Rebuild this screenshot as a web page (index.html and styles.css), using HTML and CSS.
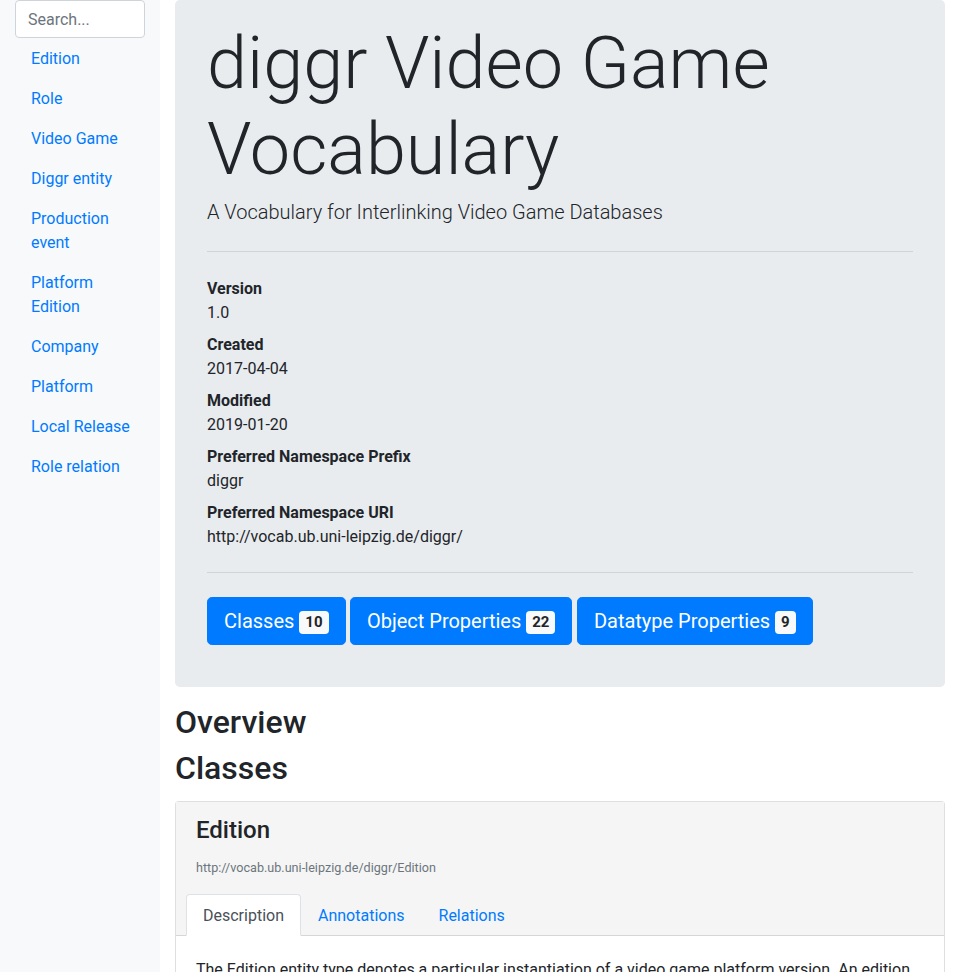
FILE: index.html
```html
<!DOCTYPE html>
<html lang="en">
<head>
<meta charset="utf-8">
<title>diggr Video Game Vocabulary</title>
<link rel="stylesheet" href="styles.css">
</head>
<body>
<div class="page">
  <aside class="sidebar">
    <input class="search" type="text" placeholder="Search...">
    <nav class="side-nav">
      <a href="#">Edition</a>
      <a href="#">Role</a>
      <a href="#">Video Game</a>
      <a href="#">Diggr entity</a>
      <a href="#">Production event</a>
      <a href="#">Platform Edition</a>
      <a href="#">Company</a>
      <a href="#">Platform</a>
      <a href="#">Local Release</a>
      <a href="#">Role relation</a>
    </nav>
  </aside>
  <main class="main">
    <section class="jumbotron">
      <h1 class="title">diggr Video Game Vocabulary</h1>
      <p class="lead">A Vocabulary for Interlinking Video Game Databases</p>
      <hr class="rule">
      <dl class="meta">
        <dt>Version</dt>
        <dd>1.0</dd>
        <dt>Created</dt>
        <dd>2017-04-04</dd>
        <dt>Modified</dt>
        <dd>2019-01-20</dd>
        <dt>Preferred Namespace Prefix</dt>
        <dd>diggr</dd>
        <dt>Preferred Namespace URI</dt>
        <dd>http://vocab.ub.uni-leipzig.de/diggr/</dd>
      </dl>
      <hr class="rule rule-end">
      <div class="buttons">
        <a class="btn" href="#">Classes <span class="badge">10</span></a>
        <a class="btn" href="#">Object Properties <span class="badge">22</span></a>
        <a class="btn" href="#">Datatype Properties <span class="badge">9</span></a>
      </div>
    </section>
    <h2 class="section-title">Overview</h2>
    <h2 class="section-title">Classes</h2>
    <div class="card">
      <div class="card-header">
        <h4 class="card-title">Edition</h4>
        <p class="uri">http://vocab.ub.uni-leipzig.de/diggr/Edition</p>
        <ul class="tabs">
          <li><a class="tab active" href="#">Description</a></li>
          <li><a class="tab" href="#">Annotations</a></li>
          <li><a class="tab" href="#">Relations</a></li>
        </ul>
      </div>
      <div class="card-body">
        <p>The Edition entity type denotes a particular instantiation of a video game platform version. An edition is a specific release of a video game on a particular platform.</p>
      </div>
    </div>
  </main>
</div>
</body>
</html>
```
FILE: styles.css
```css
* { box-sizing: border-box; }
html, body { margin: 0; padding: 0; }
body {
  font-family: Roboto, "Liberation Sans", sans-serif;
  font-size: 16px;
  line-height: 1.5;
  color: #212529;
  background: #fff;
}
a { color: #007bff; text-decoration: none; }

.page {
  display: grid;
  grid-template-columns: 160px 1fr;
  min-height: 100vh;
}

.sidebar {
  background: #f8f9fa;
  padding: 0 15px;
}
.search {
  display: block;
  width: 100%;
  height: 38px;
  padding: 6px 12px;
  font-family: inherit;
  font-size: 16px;
  line-height: 1.5;
  color: #495057;
  background: #fff;
  border: 1px solid #ced4da;
  border-radius: 4px;
}
.search::placeholder { color: #6c757d; }
.side-nav { display: flex; flex-direction: column; margin-top: 1px; }
.side-nav a { display: block; padding: 8px 12px 8px 16px; }

.main { padding: 0 15px; min-width: 0; }

.jumbotron {
  background: #e9ecef;
  border-radius: 4.8px;
  padding: 21px 32px 42px;
  margin-bottom: 16px;
}
.title {
  font-size: 72px;
  font-weight: 300;
  line-height: 1.2;
  margin: 0 0 3px;
}
.lead {
  font-size: 20px;
  font-weight: 300;
  line-height: 1.5;
  margin: 0 0 16px;
}
.rule {
  border: 0;
  border-top: 1px solid rgba(0,0,0,.1);
  margin: 24px 0;
}
.rule-end { margin-top: 23px; }
.meta { margin: 0 0 16px; padding-top: 1px; }
.meta dt { font-weight: 700; }
.meta dd { margin: 0 0 8px; }

.buttons { display: flex; gap: 4.4px; }
.btn {
  display: inline-block;
  color: #fff;
  background: #007bff;
  border: 1px solid #007bff;
  padding: 8px 16px;
  font-size: 20px;
  line-height: 1.5;
  border-radius: 4.8px;
}
.badge {
  display: inline-block;
  position: relative;
  top: -1px;
  padding: 3.75px 6px;
  font-size: 15px;
  font-weight: 700;
  line-height: 1;
  color: #212529;
  background: #f8f9fa;
  border-radius: 4px;
  vertical-align: baseline;
}

.section-title {
  font-size: 32px;
  font-weight: 500;
  line-height: 1.2;
  margin: 0 0 8px;
}

.card {
  margin-top: 13px;
  border: 1px solid rgba(0,0,0,.125);
  border-radius: 4px;
  background: #fff;
}
.card-header {
  background: #f5f5f5;
  padding: 14px 20px 12px;
  border-bottom: 1px solid rgba(0,0,0,.125);
}
.card-title {
  font-size: 24px;
  font-weight: 500;
  line-height: 1.2;
  margin: 0 0 15px;
}
.uri {
  font-size: 12.6px;
  color: #6c757d;
  margin: 0 0 16px;
  line-height: 1.5;
}
.tabs {
  list-style: none;
  display: flex;
  margin: 0 -10px -13px;
  padding: 0;
}
.tab {
  display: block;
  padding: 9px 16px 7px;
  border: 1px solid transparent;
  border-top-left-radius: 4px;
  border-top-right-radius: 4px;
}
.tab.active {
  color: #495057;
  background: #fff;
  border-color: #dee2e6 #dee2e6 #fff;
}
.card-body { padding: 22px 20px 20px; }
.card-body p { margin: 0; }
```
